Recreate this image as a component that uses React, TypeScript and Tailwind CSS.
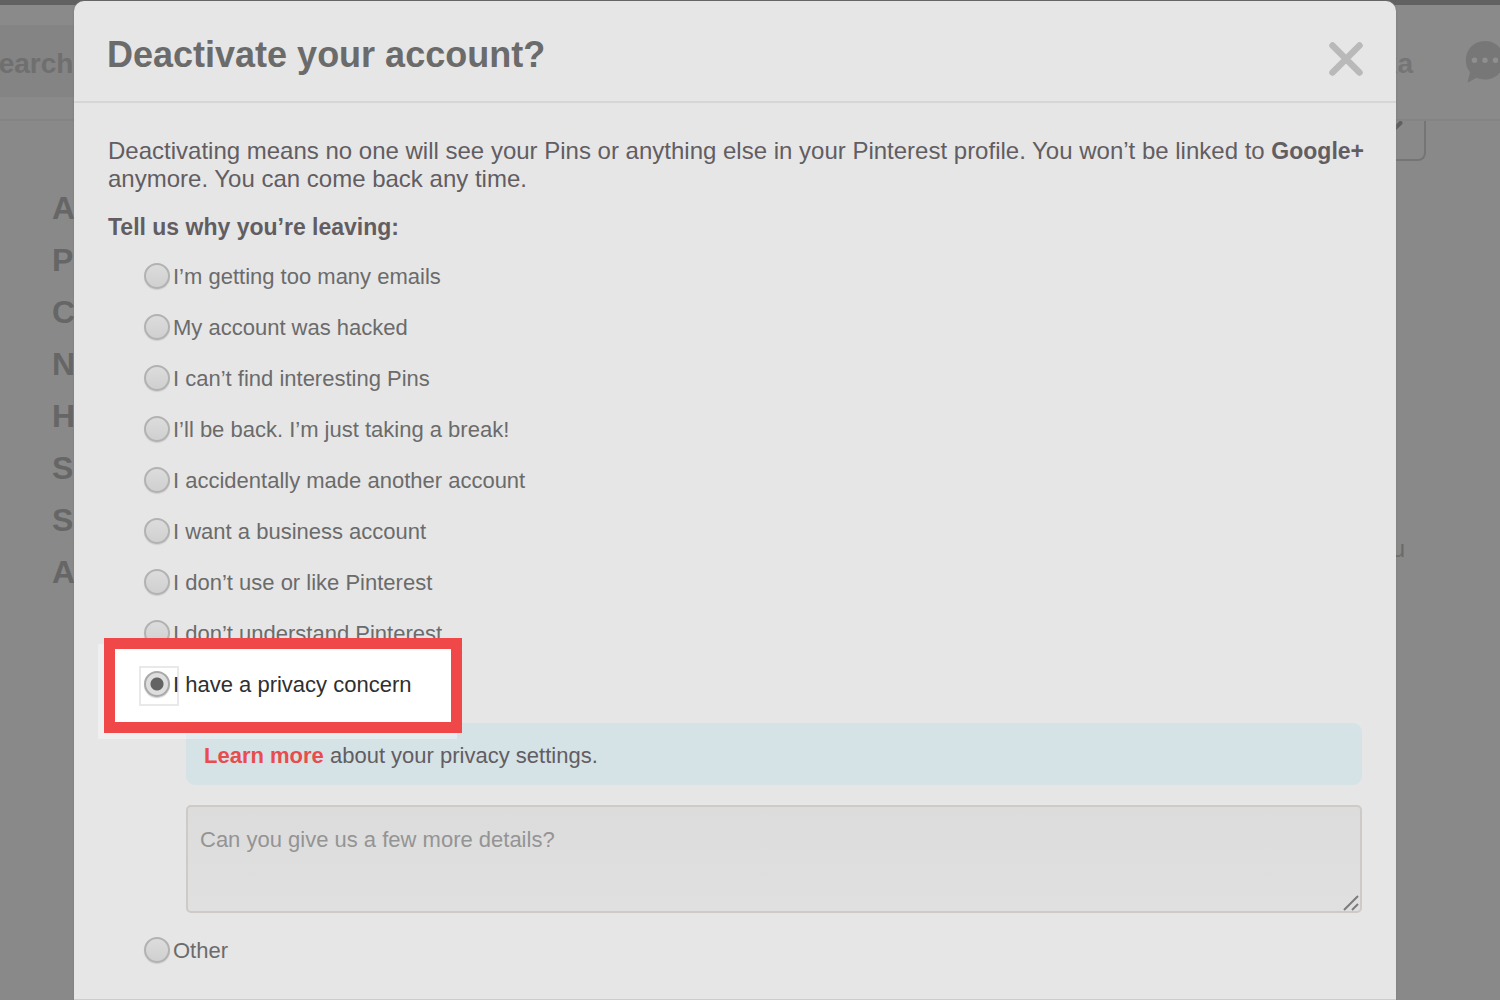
import React, { useState } from 'react';

const navItems = ['Ac', 'Pr', 'C', 'N', 'H', 'Se', 'Se', 'A'];

const reasons = [
  'I’m getting too many emails',
  'My account was hacked',
  'I can’t find interesting Pins',
  'I’ll be back. I’m just taking a break!',
  'I accidentally made another account',
  'I want a business account',
  'I don’t use or like Pinterest',
  'I don’t understand Pinterest',
];

const PRIVACY = 'I have a privacy concern';
const OTHER = 'Other';

function Page() {
  return (
    <div className="col-start-1 row-start-1 flex min-w-0 flex-col">
      <div className="h-[5px] bg-[#616161]" />
      <header className="flex h-[116px] items-start justify-between border-b-2 border-[#848484] bg-[#8a8a8a] pt-5">
        <input
          type="search"
          aria-label="Search"
          placeholder="Search"
          className="-ml-[60px] h-[72px] w-[200px] bg-[#848484] pl-10 pt-1.5 text-[28px] font-bold text-[#6f6f6f] placeholder:text-[#6f6f6f]"
        />
        <div className="flex h-[72px] items-center">
          <a href="#profile" className="pt-1.5 text-[28px] font-bold leading-8 text-[#757575]">
            ka
          </a>
          <button type="button" aria-label="Messages" className="-mr-[5px] ml-[52px] pt-0.5">
            <svg width="40" height="42" viewBox="0 0 40 42" className="block">
              <path
                d="M20 0C9 0 .8 8.500 .8 19.300C.8 24 2.300 28 5 31L2.500 41.700L11.500 36.800C14 38 16.800 38.500 20 38.500C31 38.500 39.200 30 39.200 19.300C39.200 8.500 31 0 20 0Z"
                fill="#777777"
              />
              <circle cx="9.500" cy="19.300" r="2.700" fill="#8f8f8f" />
              <circle cx="20" cy="19.300" r="2.700" fill="#8f8f8f" />
              <circle cx="30.500" cy="19.300" r="2.700" fill="#8f8f8f" />
            </svg>
          </button>
        </div>
      </header>
      <div className="flex justify-between">
        <nav aria-label="Settings" className="pl-[52px] pt-[61px]">
          <ul>
            {navItems.map((item, i) => (
              <li key={i} className="flex h-[52px] items-center">
                <a href="#settings" className="text-[32px] font-bold leading-9 text-[#666666]">
                  {item}
                </a>
              </li>
            ))}
          </ul>
        </nav>
        <div className="flex flex-col items-end">
          <button
            type="button"
            aria-label="Open list"
            className="mr-[74px] flex h-10 w-20 items-start justify-center rounded-b-lg border-2 border-t-0 border-[#757575]"
          >
            <svg width="28" height="14" viewBox="0 0 28 14" className="ml-2 block">
              <path d="M2 2L13 13L24.500 2" fill="none" stroke="#5f5f5f" strokeWidth="4" strokeLinecap="round" />
            </svg>
          </button>
          <p className="mr-[95px] mt-[374px] text-2xl leading-7 text-[#6b6b6b]">u</p>
        </div>
      </div>
    </div>
  );
}

type RadioProps = {
  label: string;
  checked: boolean;
  onSelect: () => void;
  dark?: boolean;
};

function Radio({ label, checked, onSelect, dark }: RadioProps) {
  return (
    <label
      className={
        dark
          ? 'flex h-[51px] items-center gap-[3px] text-[22px] leading-7 text-[#2f2f2f]'
          : 'flex h-[51px] items-center gap-[3px] text-[22px] leading-7 text-[#6b6b6b]'
      }
    >
      <span className="relative size-[26px] shrink-0">
        {checked && <span className="absolute -left-[5px] -top-[5px] size-10 border-2 border-[#e9e9e9]" />}
        <input
          type="radio"
          name="reason"
          checked={checked}
          onChange={onSelect}
          className="relative block size-[26px] appearance-none rounded-full border-2 border-[#b2b2b2] bg-linear-to-b from-[#dcdcdc] to-[#d0d0d0] shadow-[0_1px_1px_#cfcfcf] checked:border-[#a9a9a9] checked:bg-[radial-gradient(circle,#636363_6px,#dedede_7px)]"
        />
      </span>
      <span className="relative pt-0.5">{label}</span>
    </label>
  );
}

export default function App() {
  const [reason, setReason] = useState(PRIVACY);

  return (
    <div className="grid min-h-screen grid-cols-1 overflow-hidden bg-[#898989] font-['Liberation_Sans',Arial,sans-serif]">
      <Page />
      <section
        role="dialog"
        aria-labelledby="dialog-title"
        className="relative z-10 col-start-1 row-start-1 ml-[74px] mr-[104px] mt-px rounded-t-[10px] bg-[#e6e6e6] shadow-[0_0_2px_#777777]"
      >
        <header className="flex h-[102px] items-center justify-between border-b-2 border-[#d6d6d6] pl-[33px] pr-8">
          <h1 id="dialog-title" className="pt-2 text-4xl font-bold leading-[44px] text-[#6b6b6b]">
            Deactivate your account?
          </h1>
          <button type="button" aria-label="Close" className="pt-4">
            <svg width="36" height="36" viewBox="0 0 36 36" className="block">
              <path d="M4.500 4.500L31.500 31.500M31.500 4.500L4.500 31.500" stroke="#b9b9b9" strokeWidth="6.500" strokeLinecap="round" />
            </svg>
          </button>
        </header>
        <div className="border-b border-[#cccccc] pb-6 pl-[34px] pr-[34px] pt-[34px]">
          <p className="-mr-4 text-2xl leading-7 text-[#625d62]">
            Deactivating means no one will see your Pins or anything else in your Pinterest profile. You won’t be linked to{' '}
            <strong className="text-[23px]">Google+</strong> anymore. You can come back any time.
          </p>
          <h2 className="mt-5 text-[23px] font-bold leading-7 text-[#625d62]">Tell us why you’re leaving:</h2>
          <ul className="mt-[9px] pl-9">
            {reasons.map((r) => (
              <li key={r}>
                <Radio label={r} checked={reason === r} onSelect={() => setReason(r)} />
              </li>
            ))}
            <li className="relative z-10">
              <div className="absolute -left-[46px] -top-[14px] h-[95px] w-[359px] bg-white/35" />
              <div className="absolute -left-10 -top-5 h-[95px] w-[358px] border-[11px] border-[#f04848] bg-white" />
              <div className="relative">
                <Radio dark label={PRIVACY} checked={reason === PRIVACY} onSelect={() => setReason(PRIVACY)} />
              </div>
            </li>
            <li className="pl-[42px] pt-[14px]">
              <p className="rounded-[9px] bg-[#d5e2e6] px-[18px] pb-[15px] pt-[19px] text-[22px] leading-7 text-[#625d62]">
                <a href="#privacy" className="font-bold text-[#e84c4c]">
                  Learn more
                </a>{' '}
                about your privacy settings.
              </p>
              <div className="relative mt-5">
                <textarea
                  aria-label="Details"
                  placeholder="Can you give us a few more details?"
                  className="block h-[108px] w-full resize-none rounded-[5px] border-2 border-[#cdcac7] bg-linear-to-b from-[#dcdcdc] to-[#e0e0e0] px-3 pt-[19px] text-[22px] leading-7 text-[#6b6b6b] placeholder:text-[#949494]"
                />
                <svg width="16" height="16" viewBox="0 0 16 16" className="absolute bottom-[2px] right-[3px]">
                  <path d="M1 15L15 1M9 15L15 9" stroke="#7c7c7c" strokeWidth="2" />
                </svg>
              </div>
            </li>
            <li className="pt-[11px]">
              <Radio label={OTHER} checked={reason === OTHER} onSelect={() => setReason(OTHER)} />
            </li>
          </ul>
        </div>
      </section>
    </div>
  );
}
